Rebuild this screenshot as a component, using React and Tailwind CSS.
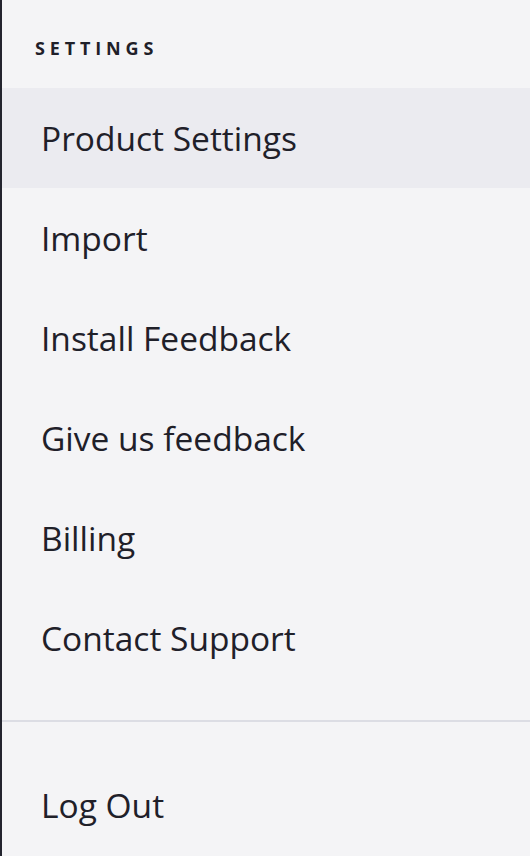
const items = ['Product Settings', 'Import', 'Install Feedback', 'Give us feedback', 'Billing', 'Contact Support'];

export default function App() {
  return (
    <div className="flex h-[856px] w-[530px] flex-col overflow-hidden border-l-2 border-[#23242e] bg-[#f4f4f6] font-['Open_Sans',sans-serif] text-[#1f2029]">
      <div className="flex h-[88px] items-center pl-[33px] pt-[7px]">
        <span className="text-[18px] leading-none font-bold tracking-[0.27em]">SETTINGS</span>
      </div>
      <nav className="flex flex-col">
        {items.map((label, i) => (
          <a
            key={label}
            className={`flex h-[100px] items-center pl-[39px] text-[33.5px] ${i === 0 ? 'bg-[#ebebf0]' : ''}`}
          >
            {label}
          </a>
        ))}
      </nav>
      <div className="mt-[32px] h-[2px] bg-[#dcdde4]" />
      <a className="mt-[33px] flex h-[100px] items-center pl-[39px] text-[33.5px]">Log Out</a>
    </div>
  );
}
